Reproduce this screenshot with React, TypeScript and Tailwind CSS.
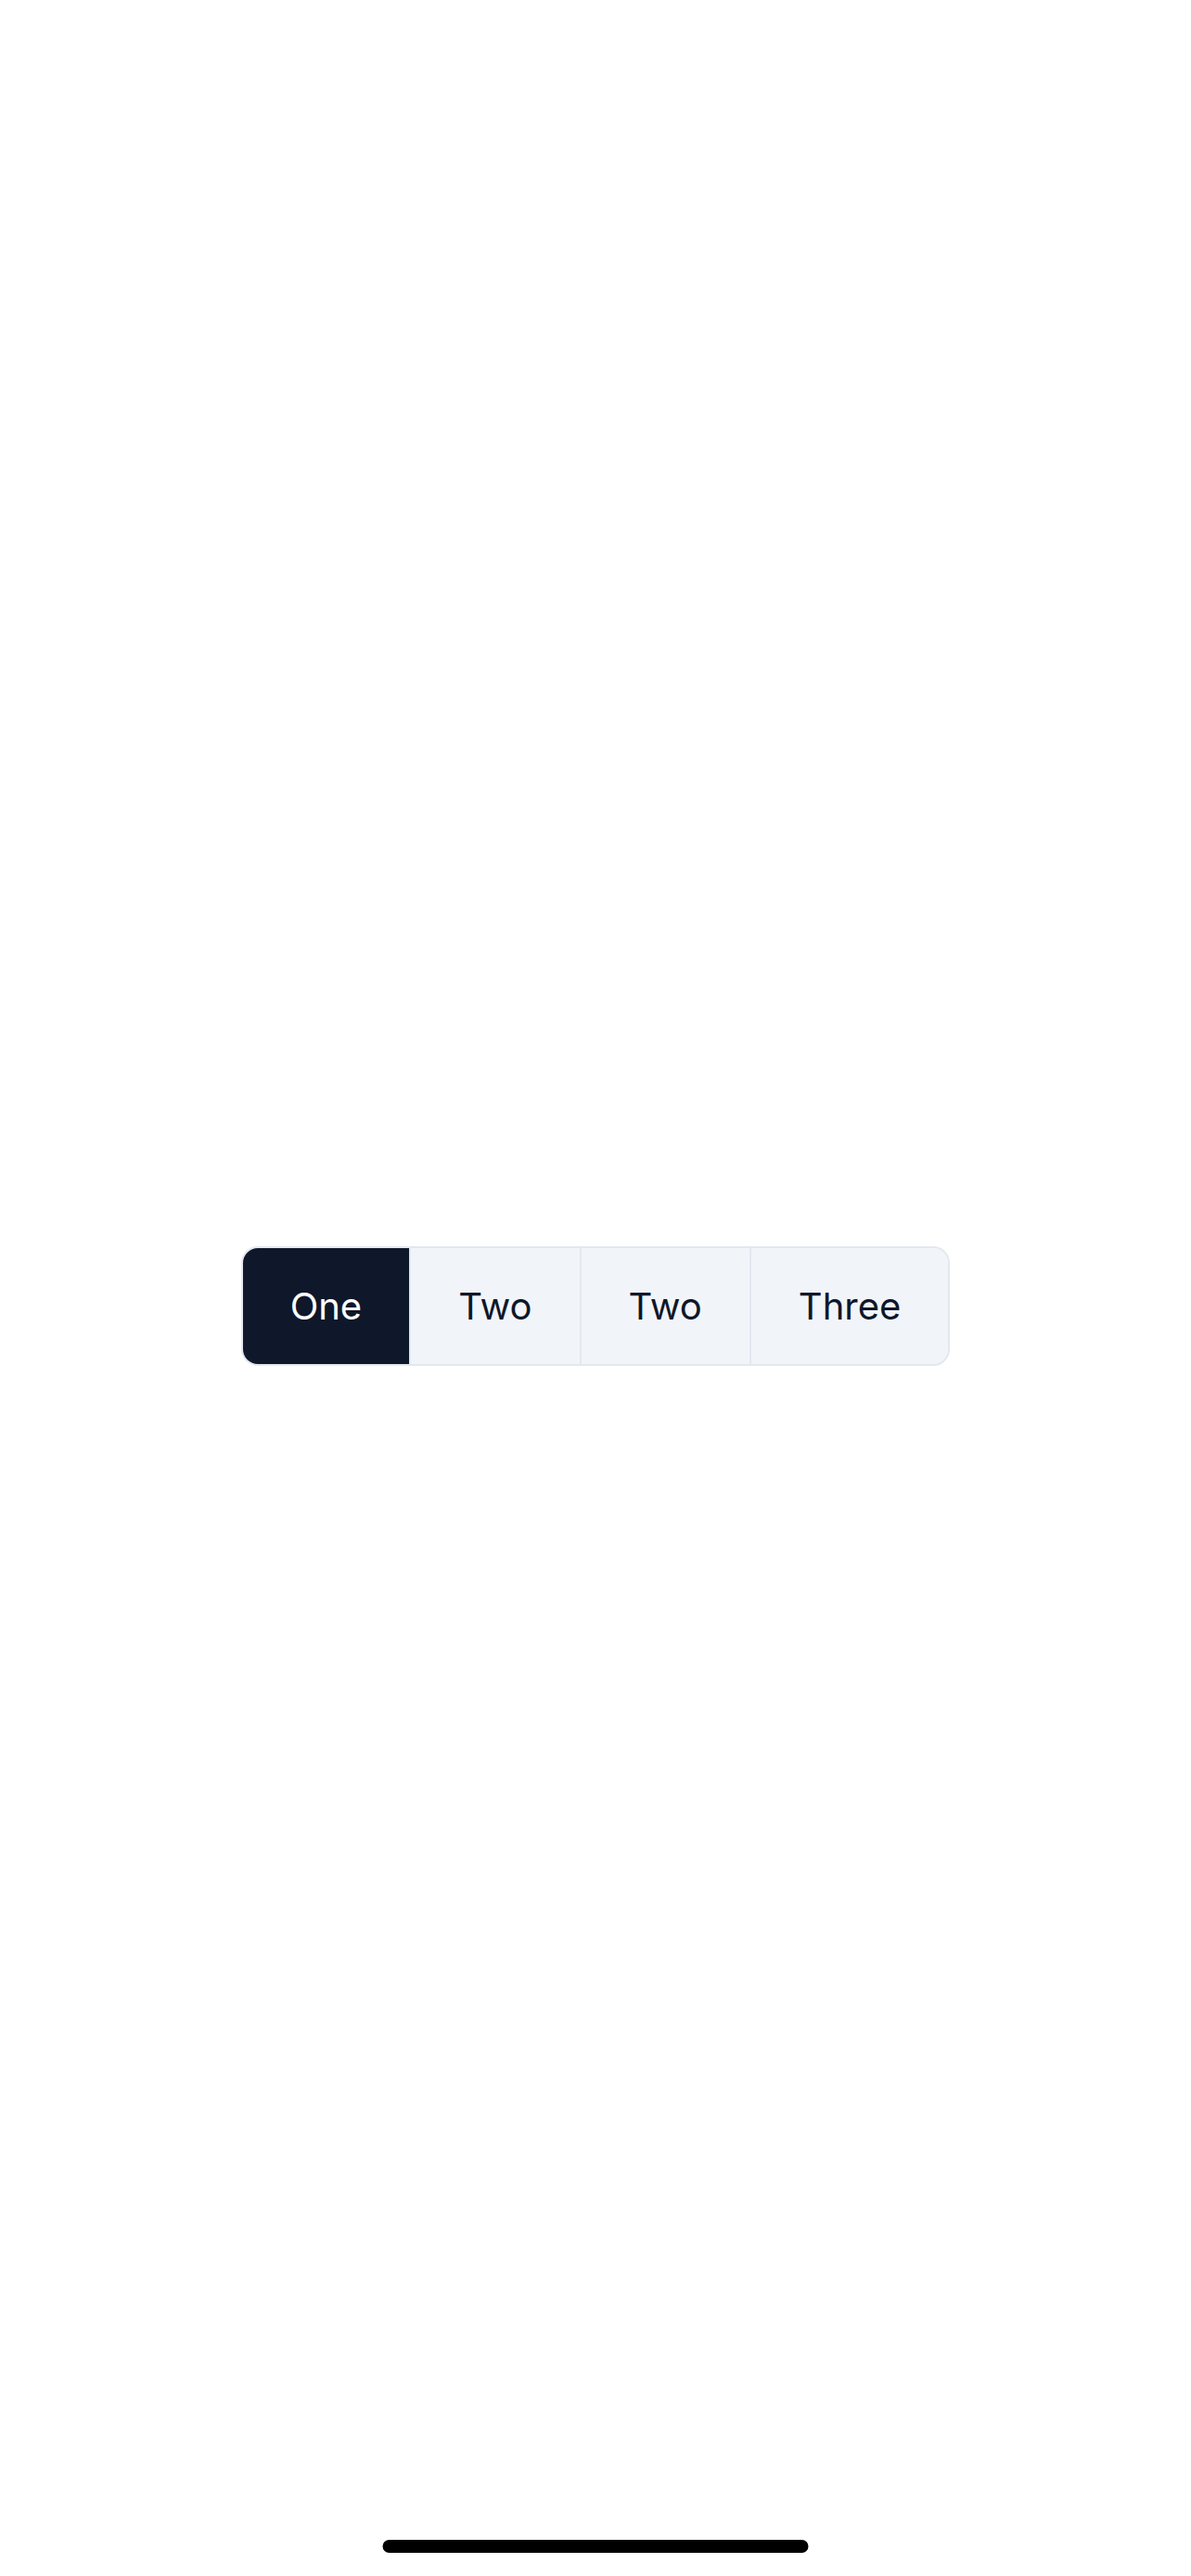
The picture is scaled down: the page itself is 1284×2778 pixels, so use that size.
import { useState } from "react";

const options = ["One", "Two", "Two", "Three"];

export default function App() {
  const [active, setActive] = useState(0);

  return (
    <div
      className="relative flex h-[2778px] w-full flex-col bg-white pt-[39px]"
      style={{ fontFamily: "Inter, 'Noto Sans', sans-serif" }}
    >
      <main className="flex flex-1 items-center justify-center">
        <div className="flex h-[129px] overflow-hidden rounded-[18px] border-2 border-[#e2e8f0] bg-[#f1f5f9]">
          {options.map((label, i) => (
            <button
              key={i}
              onClick={() => setActive(i)}
              className={`flex h-full items-center justify-center px-[51px] text-[40px] leading-none ${
                i > 0 ? "border-l-2 border-[#e2e8f0]" : ""
              } ${
                active === i
                  ? "bg-[#0f172a] text-white"
                  : "bg-[#f1f5f9] text-[#0f172a]"
              }`}
            >
              {label}
            </button>
          ))}
        </div>
      </main>

      {/* home indicator */}
      <div className="absolute bottom-[25px] left-1/2 h-[14px] w-[459px] -translate-x-1/2 rounded-full bg-black" />
    </div>
  );
}
